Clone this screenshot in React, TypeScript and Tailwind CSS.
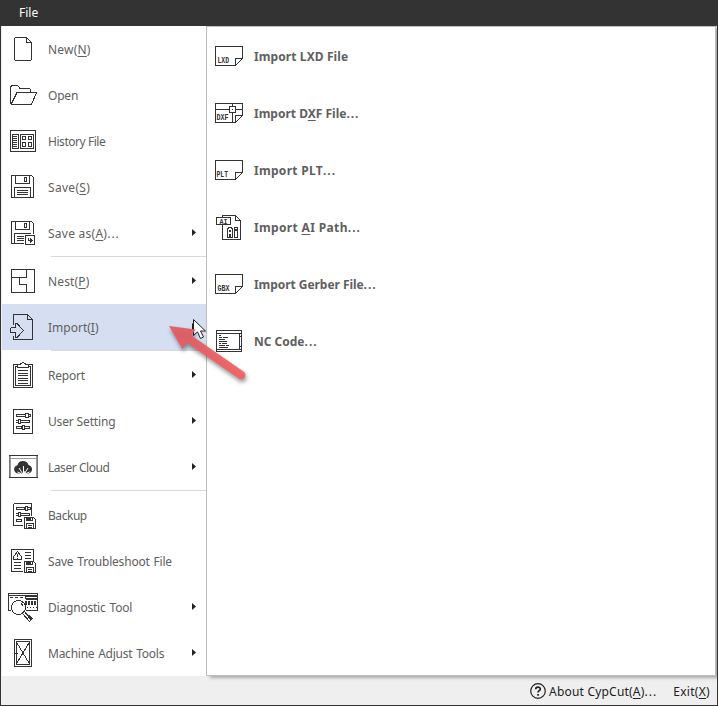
import type { ReactNode } from "react";

const Svg = ({ children }: { children: ReactNode }) => (
  <svg
    className="w-8 h-8 shrink-0 fill-none stroke-[#333] text-[#333]"
    viewBox="0 0 32 32"
    shapeRendering="crispEdges"
  >
    {children}
  </svg>
);

const Tag = ({ x, y, size, width, children }: { x: number; y: number; size: number; width: number; children: string }) => (
  <text
    x={x}
    y={y}
    fontSize={size}
    textLength={width}
    lengthAdjust="spacingAndGlyphs"
    className="fill-[#333] stroke-none font-['Liberation_Mono',monospace] font-bold"
  >
    {children}
  </text>
);

const Floppy = () => (
  <>
    <path d="M4.5 4.5H24.5L26.5 6.5V26.5H4.5ZM8.5 4.5V12.5H22.5V4.5M17.5 6.5h2v4h-2z" />
    <path d="M7.5 26.5V16.5H23.5V26.5M10 19.5H21M10 21.5H21M10 23.5H21" />
  </>
);

const MiniFloppy = ({ y }: { y: number }) => (
  <g transform={`translate(17 ${y})`}>
    <path className="fill-white" d="M.5 .5H9.5L11.5 2.5V11.5H.5Z" />
    <path d="M2.5 0V3.5H8.5V0M2.5 11V6.5H9.5V11M4 8.5H8M4 10.5H8" />
    <path className="fill-[#333] stroke-none" d="M3 1h4v2H3z" />
  </g>
);

const NewIcon = () => (
  <Svg>
    <path d="M8 4.5H19.5L24.5 9.5V27M24 27.5H8M7.5 27V5M19.5 5V9.5H24" />
  </Svg>
);

const OpenIcon = () => (
  <Svg>
    <path d="M3.5 25V8L5 6.5H10.5L13 9.5H22.5L23.5 10.5V13M4 25.5H24.5L29.5 13.5H10L4 25.5" />
  </Svg>
);

const HistoryIcon = () => (
  <Svg>
    <path d="M3.5 5.5H28.5V26.5H3.5ZM5.5 9.5H11.5V23.5H5.5ZM13.5 9.5H26.5V23.5H13.5Z" />
    <path d="M5 11.5h5M5 13.5h5M5 15.5h5M5 17.5h5M5 19.5h5M5 21.5h5" />
    <path d="M15.5 11.5h3v3h-3zM21.5 11.5h3v3h-3zM15.5 17.5h3v4h-3zM21.5 17.5h3v4h-3z" />
  </Svg>
);

const SaveIcon = () => (
  <Svg>
    <Floppy />
  </Svg>
);

const SaveAsIcon = () => (
  <Svg>
    <Floppy />
    <path className="fill-white stroke-white" d="M17.5 17.5h11v11h-11z" />
    <path className="fill-white" d="M18.5 18.5h9v9h-9z" />
    <path d="M21.5 20.5V23.5H25" />
    <path className="fill-[#333] stroke-none" d="M23 21l3 2.5-3 2.8z" />
  </Svg>
);

const NestIcon = () => (
  <Svg>
    <path d="M4.5 4.5H27.5V27.5H4.5ZM4 12.5H20M19.5 4V12M12.5 12V19.5H19.5V28" />
  </Svg>
);

const ImportIcon = () => (
  <Svg>
    <path d="M6.5 14V4L7 3.5H20.5L25.5 8.5V28L25 28.5H7L6.5 28V25M20.5 4V8.5H25" />
    <path d="M3.5 17V21.5H8.5V26L10 26.5L16.5 19.5L10 12.5L8.5 13V16.5H4" />
  </Svg>
);

const ReportIcon = () => (
  <Svg>
    <path d="M10.5 5.5H7L6.5 6V28L7 28.5H25L25.5 28V6L25 5.5H21.5" />
    <path d="M10.5 7.5H8.5V26.5H23.5V7.5H21.5M10.5 8.5V5.5H13L16 3L19 5.5H21.5V8.5Z" />
    <path d="M11 11.5H21M11 14.5H21M11 16.5H21M11 19.5H21M11 21.5H21M11 24.5H21" />
  </Svg>
);

const Sliders = () => (
  <>
    <path d="M9.5 9.5h9v2h-9zM21 9.5h2v2h-2M18.5 8.5h3v4h-3z" />
    <path d="M9 15.5h2v2h-2M14 15.5h8.5v2h-8.5M11.5 14.5h2v4h-2z" />
    <path d="M9.5 21.5h5v2h-5zM18 21.5h4.5v2h-4.5M15.5 20.5h2v4h-2z" />
  </>
);

const SettingIcon = () => (
  <Svg>
    <path d="M7 4.5H25L25.5 5V28L25 28.5H7L6.5 28V5Z" />
    <Sliders />
  </Svg>
);

const CloudIcon = () => (
  <Svg>
    <path className="stroke-[#999]" d="M3.5 5V26M29.5 5V26M3 7.5H30" />
    <path className="stroke-[#777]" d="M2.5 4V27M30.5 4V27" />
    <path d="M2 4.5H31M2 26.5H31" />
    <path
      className="fill-[#333] stroke-none"
      shapeRendering="auto"
      d="M11 22.5C5.8 21.5 6 15 10.5 14.2C11 8.5 20.5 8.5 21.5 14C26.5 15 26 22 21.5 22.5L19 22.5L17.5 20L15 22.5Z"
    />
    <path className="stroke-white" shapeRendering="auto" d="M16.5 15V22.5M12 17L15.5 22.5M21 17L17.5 22.5M10.5 21L14 22.5M22.5 21L19 22.5" />
  </Svg>
);

const BackupIcon = () => (
  <Svg>
    <path d="M7 4.5H24L24.5 5V17M16 26.5H7L6.5 26V5" />
    <path d="M9.5 8.5h8v2h-8zM21 8.5h2v2h-2M18.5 7.5h2v4h-2z" />
    <path d="M9 14.5h2v2h-2M14 14.5h8.5v2h-8.5M11.5 13.5h2v4h-2zM9.5 20.5h5v2h-5z" />
    <MiniFloppy y={18} />
  </Svg>
);

const TroubleIcon = () => (
  <Svg>
    <path d="M26.5 16V4.5H4.5V26.5H16" />
    <path d="M10.5 6.5L14.5 12V14.5H6.5V12ZM10.5 9V12M10.5 12.5V14" />
    <path d="M18 7.5h6M18 10.5h6M18 13.5h6M7 17.5h7M7 20.5h7M7 23.5h7" />
    <MiniFloppy y={16} />
  </Svg>
);

const DiagnosticIcon = () => (
  <Svg>
    <path d="M1.5 2V19.5H4M1 2.5H31M30.5 2V19M1 4.5H31M19 8.5H31" />
    <path strokeDasharray="3 2" d="M3 6.5H17" />
    <path d="M18 5.5h12v2h-12z" />
    <path strokeWidth="4" strokeDasharray="2 1" d="M18 12H30" />
    <path strokeDasharray="1 2" d="M20 16.5H30" />
    <path d="M19 19.5H31" />
    <circle className="fill-white" cx="11.5" cy="16.5" r="7" />
    <path d="M14 12L16 15" />
    <path className="fill-white" d="M17.5 20.5L25 27.5L22.5 30.5L15.5 22.5ZM18 22L24 28.5" />
  </Svg>
);

const MachineIcon = () => (
  <Svg>
    <path d="M7.5 2.5H24.5V29.5H7.5ZM9.5 4.5H22.5V27.5H9.5Z" />
    <path d="M10 6L22 26M22 6L10 26M8 16.5H11" />
  </Svg>
);

const Sheet = () => <path d="M2.5 6.5H29.5V18.5L22.5 25.5H2.5ZM22.5 25V18.5H29" />;

const LxdIcon = () => (
  <Svg>
    <Sheet />
    <Tag x={4.5} y={23} size={9} width={11.5}>LXD</Tag>
  </Svg>
);

const DxfIcon = () => (
  <Svg>
    <Sheet />
    <path d="M2 12.5H30M19.5 6V26" />
    <path className="fill-white" d="M16.5 9.5h6v6h-6z" />
    <path d="M19 12.5h1" />
    <Tag x={3.5} y={23} size={9} width={12}>DXF</Tag>
  </Svg>
);

const PltIcon = () => (
  <Svg>
    <Sheet />
    <Tag x={3.5} y={23} size={9} width={11.5}>PLT</Tag>
  </Svg>
);

const AiIcon = () => (
  <Svg>
    <path d="M9.5 14V28L10 28.5H27L27.5 28V9.5L22.5 4.5H10L9.5 6M22.5 5V9.5H27" />
    <path className="fill-white" d="M3.5 6.5h14v7h-14z" />
    <Tag x={6.5} y={12.5} size={7} width={8}>AI</Tag>
    <path d="M14.5 26.5V18L16 16.5H18L19.5 18V26.5H17.5V23.5H16.5V26.5ZM16.5 19.5h1v1h-1zM21.5 19.5h3v7h-3zM21.5 16.5h3v2h-3z" />
  </Svg>
);

const GbxIcon = () => (
  <Svg>
    <Sheet />
    <Tag x={4.5} y={23} size={9} width={12}>GBX</Tag>
  </Svg>
);

const NcIcon = () => (
  <Svg>
    <path d="M3.5 5.5H28.5V26.5H3.5ZM3 8.5H29M3 24.5H29M26.5 9V24M28 11.5H26M28 21.5H26" />
    <path d="M6 10.5h2M6 12.5h3M10 12.5h5M6 14.5h6M6 16.5h8M6 18.5h2M9 18.5h5M6 20.5h6M13 20.5h3M6 22.5h9" />
  </Svg>
);

type Item = {
  icon: ReactNode;
  label: ReactNode;
  arrow?: boolean;
  active?: boolean;
  tracking?: string;
};

const Key = ({ children }: { children: string }) => (
  <span className="underline decoration-1 underline-offset-2">{children}</span>
);

const Dots = () => <span className="tracking-[1px]">...</span>;

const groups: Item[][] = [
  [
    { icon: <NewIcon />, label: <>New(<Key>N</Key>)</>, tracking: "tracking-[0.2px]" },
    { icon: <OpenIcon />, label: "Open", tracking: "tracking-[-0.2px]" },
    { icon: <HistoryIcon />, label: "History File", tracking: "tracking-[-0.45px]" },
    { icon: <SaveIcon />, label: <>Save(<Key>S</Key>)</>, tracking: "tracking-[0.3px]" },
    { icon: <SaveAsIcon />, label: <>Save as(<Key>A</Key>)<Dots /></>, arrow: true, tracking: "tracking-[0.25px]" }
  ],
  [
    { icon: <NestIcon />, label: <>Nest(<Key>P</Key>)</>, arrow: true, tracking: "tracking-[0.15px]" },
    { icon: <ImportIcon />, label: <>Import(<Key>I</Key>)</>, arrow: true, active: true }
  ],
  [
    { icon: <ReportIcon />, label: "Report", arrow: true, tracking: "tracking-[-0.2px]" },
    { icon: <SettingIcon />, label: "User Setting", arrow: true, tracking: "tracking-[-0.15px]" },
    { icon: <CloudIcon />, label: "Laser Cloud", arrow: true, tracking: "tracking-[-0.45px]" }
  ],
  [
    { icon: <BackupIcon />, label: "Backup", tracking: "tracking-[-0.45px]" },
    { icon: <TroubleIcon />, label: "Save Troubleshoot File", tracking: "tracking-[-0.2px] [word-spacing:1px]" },
    { icon: <DiagnosticIcon />, label: "Diagnostic Tool", arrow: true, tracking: "tracking-[-0.2px] [word-spacing:1px]" },
    { icon: <MachineIcon />, label: "Machine Adjust Tools", arrow: true, tracking: "tracking-[-0.25px] [word-spacing:1px]" }
  ]
];

const importItems: Item[] = [
  { icon: <LxdIcon />, label: "Import LXD File", tracking: "tracking-[0.1px]" },
  { icon: <DxfIcon />, label: <>Import D<Key>X</Key>F File<Dots /></> },
  { icon: <PltIcon />, label: <>Import PLT<Dots /></>, tracking: "tracking-[0.3px]" },
  { icon: <AiIcon />, label: <>Import <Key>A</Key>I Path<Dots /></>, tracking: "tracking-[0.35px]" },
  { icon: <GbxIcon />, label: <>Import Gerber File<Dots /></>, tracking: "tracking-[-0.05px]" },
  { icon: <NcIcon />, label: <>NC Code<Dots /></> }
];

const MenuRow = ({ item }: { item: Item }) => (
  <li className={`flex items-center h-[46px] pl-[5px] pr-2 ${item.active ? "bg-[#d5dff1]" : ""}`}>
    {item.icon}
    <span className={`ml-[9px] pt-0.5 flex-1 whitespace-nowrap ${item.tracking ?? ""}`}>{item.label}</span>
    {item.arrow && (
      <svg className="w-1 h-[7px] mr-[2px] mb-0.5 fill-[#222]" viewBox="0 0 4 7">
        <path d="M0 0L4 3.5L0 7Z" />
      </svg>
    )}
  </li>
);

const SideMenu = () => (
  <nav className="w-[205px] shrink-0 bg-white border-l border-[#f0f0f0] text-xs text-[#606060]">
    {groups.map((group, i) => (
      <ul key={i}>
        {i > 0 && <li className="h-0.5 ml-[49px] border-t border-[#d9d9d9]" />}
        {group.map((item, j) => (
          <MenuRow key={j} item={item} />
        ))}
      </ul>
    ))}
  </nav>
);

const ImportPanel = () => (
  <section className="relative flex-1 bg-white border border-[#bdbdbd] shadow-[4px_2px_3px_#aaa] text-xs font-bold text-[#606060]">
    <ul>
      {importItems.map((item, i) => (
        <li key={i} className="flex items-center h-[57px] pl-1.5">
          {item.icon}
          <span className={`ml-[9px] pt-0.5 whitespace-nowrap ${item.tracking ?? ""}`}>{item.label}</span>
        </li>
      ))}
    </ul>
  </section>
);

const Footer = () => (
  <footer className="flex items-center justify-end h-[29px] pr-[7px] bg-[#efefef] text-xs text-[#222]">
    <svg className="w-4 h-4 mr-[3px] fill-none stroke-[#222]" viewBox="0 0 16 16">
      <circle cx="8" cy="8" r="7.3" strokeWidth="1.2" />
      <path strokeWidth="1.7" d="M5.7 6.3C5.7 3.3 10.4 3.5 10.3 6.1C10.2 7.7 8 7.7 8 9.6M8 11V12.7" />
    </svg>
    <span className="pt-0.5 tracking-[0.2px]">About CypCut(<Key>A</Key>)<Dots /></span>
    <span className="ml-4 pt-0.5 tracking-[0.3px]">Exit(<Key>X</Key>)</span>
  </footer>
);

// Red callout arrow and the mouse pointer, floating over the menu
const Pointer = () => (
  <svg className="absolute z-20 left-[159px] top-[310px] w-[100px] h-[80px] pointer-events-none" viewBox="160 310 100 80">
    <defs>
      <linearGradient id="red" x1="0" y1="0" x2="0.3" y2="1">
        <stop offset="0" stopColor="#e05a60" />
        <stop offset="1" stopColor="#f26164" />
      </linearGradient>
    </defs>
    <path
      className="fill-white stroke-[#222]"
      d="M193.5 319.5V335.5L197.5 332L200.5 338.5L203.5 337L200.5 331H205.5Z"
    />
    <path
      className="drop-shadow-[1px_3px_2px_rgba(0,0,0,0.45)]"
      fill="url(#red)"
      fillOpacity="0.93"
      d="M169 326L195.5 329.5L191.5 335.5L243.5 371.5A4 4 0 0 1 239 378.5L186.5 342.5L182.5 349Z"
    />
  </svg>
);

const App = () => (
  <div className="relative flex flex-col w-[718px] h-[706px] overflow-hidden bg-[#efefef] border-x border-b border-[#333] font-['Noto_Sans',sans-serif]">
    <header className="flex items-center h-[26px] shrink-0 pl-[18px] bg-[#333] text-xs text-white">
      File
    </header>
    <main className="relative z-10 flex h-[650px] shrink-0 pr-px">
      <SideMenu />
      <ImportPanel />
    </main>
    <Footer />
    <Pointer />
  </div>
);

export default App;
